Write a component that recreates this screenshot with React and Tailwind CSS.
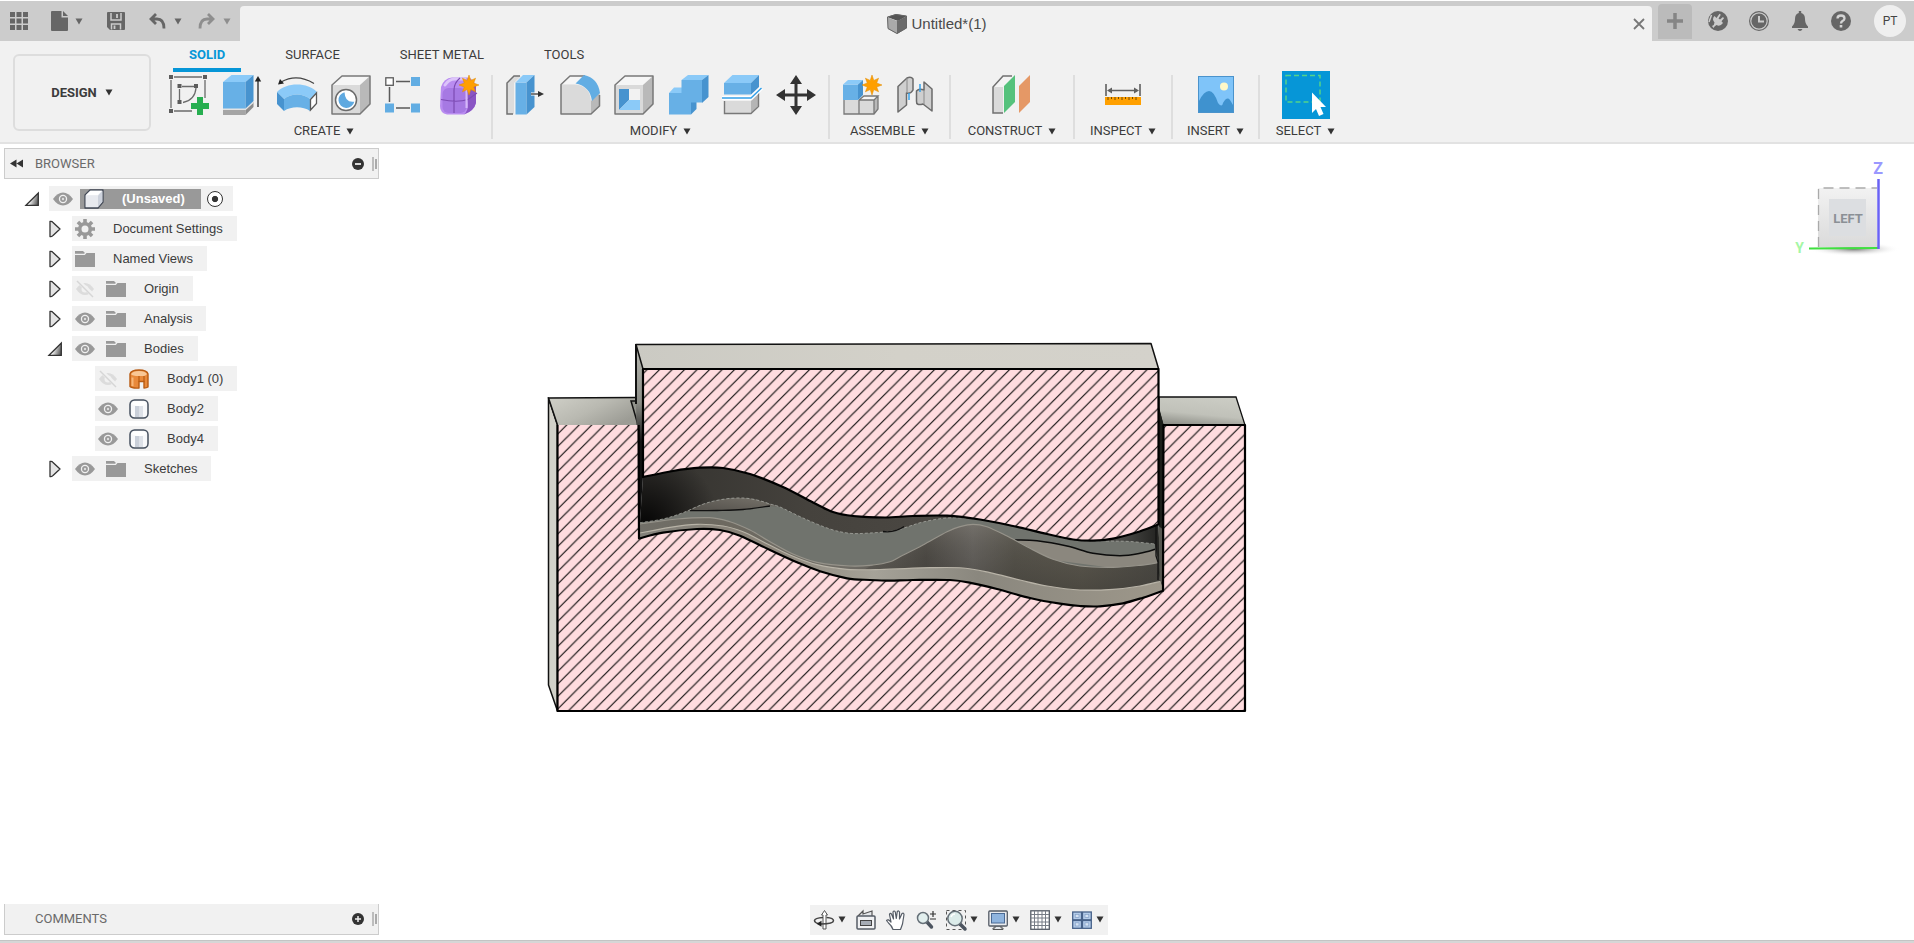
import React from "react";

/* ---------- geometry helpers ---------- */

// Smooth curve segment list through the points (Catmull-Rom to Bezier)
function curve(pts) {
  let d = "";
  for (let i = 0; i < pts.length - 1; i++) {
    const p0 = pts[i - 1] || pts[i];
    const p1 = pts[i];
    const p2 = pts[i + 1];
    const p3 = pts[i + 2] || p2;
    const c = [
      p1[0] + (p2[0] - p0[0]) / 6, p1[1] + (p2[1] - p0[1]) / 6,
      p2[0] - (p3[0] - p1[0]) / 6, p2[1] - (p3[1] - p1[1]) / 6,
      p2[0], p2[1],
    ].map((n) => n.toFixed(1));
    d += ` C${c.join(" ")}`;
  }
  return d;
}
const line = (pts) => `M${pts[0].join(" ")}${curve(pts)}`;
// Closed band between two left-to-right curves
const band = (top, bottom) => {
  const back = [...bottom].reverse();
  return `${line(top)} L${back[0].join(" ")}${curve(back)} Z`;
};

/* ---------- small shared pieces ---------- */

const Caret = ({ className = "text-[#333]" }) => (
  <svg width="8" height="7" viewBox="0 0 8 7" className={`shrink-0 ${className}`} aria-hidden="true">
    <path d="M0.5 0.5h7L4 6.5z" fill="currentColor" />
  </svg>
);

const Svg = ({ w = 40, h = 40, children }) => (
  <svg width={w} height={h} viewBox={`0 0 ${w} ${h}`} className="block shrink-0 overflow-visible" fill="none" aria-hidden="true">
    {children}
  </svg>
);

const Star = ({ x, y }) => (
  <path
    transform={`translate(${x} ${y})`}
    fill="#ff9f00"
    stroke="#e08a00"
    strokeWidth="0.5"
    d="M0-10 1.8-4.6 6.6-6.8 4.7-2 10 0 4.7 2 6.6 6.8 1.8 4.6 0 10-1.8 4.6-6.6 6.8-4.7 2-10 0-4.7-2-6.6-6.8-1.8-4.6z"
  />
);

/* ---------- ribbon icons ---------- */

const SketchIcon = () => (
  <Svg>
    <path d="M5 2h28M2 5v28M5 36h18M36 5v18M13 11.5h12M10.5 14v11M27 13q-1 12-13 14.5" stroke="#6b6b6b" strokeWidth="1.3" />
    {[[0, 0], [34, 0], [0, 34], [8.5, 9], [25, 9], [8.5, 25]].map(([x, y]) => (
      <rect key={`${x}-${y}`} x={x} y={y} width="4" height="4" fill="#5c5c5c" />
    ))}
    <path d="M28 22h6v6h6v6h-6v6h-6v-6h-6v-6h6z" fill="#27ae50" />
  </Svg>
);

const ExtrudeIcon = () => (
  <Svg>
    <path d="M0 35h22.500v5H0z" fill="#a5a5a5" />
    <path d="M22.500 35 30.500 27v5l-8 8z" fill="#8c8c8c" />
    <path d="M0 33h22.500L30.500 26v2l-8 7H0z" fill="#e3e3e3" />
    <path d="M0 7h22.500v26.500H0z" fill="#67b0e6" />
    <path d="M0 7 8.500 0h22l-8 7z" fill="#8bcaf8" />
    <path d="M22.500 7l8-7v26l-8 7.500z" fill="#4793cf" />
    <path d="M35 5v27" stroke="#222" strokeWidth="1.3" />
    <path d="M31.800 6.500 35 1l3.200 5.500z" fill="#222" />
  </Svg>
);

const RevolveIcon = () => (
  <Svg>
    <path d="M0 17C9 7 31 7 40 17l-7 7C26 18 14 18 7 24z" fill="#8bcaf8" />
    <path d="M7 24C14 18 26 18 33 24v12c-7-5-19-5-26 0z" fill="#67b0e6" />
    <path d="M0 17l7 7v12l-7-7z" fill="#4793cf" />
    <path d="M33.500 24.500 39.500 18v10.500L33.500 35z" fill="#fff" stroke="#5a5a5a" strokeWidth="1.3" />
    <path d="M4 7Q20-2 37 8.500" stroke="#444" strokeWidth="1.3" />
    <path d="M1 9.500 3 4l4 4.500z" fill="#222" />
  </Svg>
);

const GreyCube = () => (
  <>
    <path d="M1 10h28v29H1z" fill="#dadada" />
    <path d="M1 10 11 1h28l-10 9z" fill="#f6f6f6" />
    <path d="M29 10 39 1v28L29 39z" fill="#b9b9b9" />
    <path d="M1 10 11 1h28v28L29 39H1z" stroke="#787878" strokeWidth="1.5" strokeLinejoin="round" />
  </>
);

const HoleIcon = () => (
  <Svg>
    <GreyCube />
    <circle cx="15" cy="25" r="10.5" fill="#fff" stroke="#6b6b6b" strokeWidth="1.5" />
    <path d="M13.500 17.200a8 8 0 1 0 9.800 9.500Q14 28 13.500 17.200z" fill="#5fa9e0" />
  </Svg>
);

const PatternIcon = () => (
  <Svg>
    <path d="M11 6.500h14M4.500 12v15M11 33h14" stroke="#5a5a5a" strokeWidth="1.5" />
    <rect x="0.8" y="2.8" width="7.5" height="7.5" fill="#fff" stroke="#5a5a5a" strokeWidth="1.3" />
    <rect x="26" y="2" width="9" height="9" fill="#62ade3" />
    <rect x="0" y="28.5" width="9" height="9" fill="#62ade3" />
    <rect x="26" y="28.5" width="9" height="9" fill="#62ade3" />
  </Svg>
);

const FormIcon = () => (
  <Svg>
    <path d="M2 12Q5 3 13 2.500H28Q35 3 37 12V28Q35 36 25 39.500H8Q1 38 1 31z" fill="#b98cf0" />
    <path d="M28 16 37 10V28Q35 36 25 39.500Q29 36 29 30z" fill="#8a55c4" />
    <rect x="3.5" y="13" width="24" height="25" rx="6" fill="#a679e3" />
    <path d="M6 10Q10 4 16 4h10" stroke="#dcc4fa" strokeWidth="3" strokeLinecap="round" />
    <path d="M15 38V15Q15 8 21 3M2 24.500Q18 28 29 24.500L38 18" stroke="#7c4bb3" strokeWidth="1.2" />
    <path d="M27.500 14V33" stroke="#d4b8f8" strokeWidth="2" />
    <Star x={30} y={10} />
  </Svg>
);

const PressPullIcon = () => (
  <Svg>
    <path d="M1 8 8 1h7L8 8v31H1z" fill="#dcdcdc" />
    <path d="M14 1H8L1 8v31h6" stroke="#707070" strokeWidth="1.5" />
    <path d="M9.500 7.500h11v32h-11z" fill="#67b0e6" />
    <path d="M9.500 7.500 17 0h11.500l-8 7.500z" fill="#8bcaf8" />
    <path d="M20.500 7.500l8-7.500v32l-8 7.500z" fill="#4793cf" />
    <path d="M25 19h7" stroke="#fff" strokeWidth="3" />
    <path d="M25 19h8" stroke="#333" strokeWidth="1.3" />
    <path d="M32 16l6 3-6 3z" fill="#333" />
  </Svg>
);

const FilletIcon = () => (
  <Svg>
    <path d="M1 9.500 10 1H25L16 9.500z" fill="#f6f6f6" />
    <path d="M1 9.500H15Q30 11 31 26V39H1z" fill="#dadada" />
    <path d="M31 26 39.500 18V31L31 39z" fill="#b9b9b9" />
    <path d="M25 1H10L1 9.500V39H31L39.500 31V20" stroke="#787878" strokeWidth="1.5" strokeLinejoin="round" />
    <path d="M15.500 8.500 24 0Q38 3 40 18l-8 8Q30 11 15.500 8.500z" fill="#62ade3" />
  </Svg>
);

const ShellIcon = () => (
  <Svg>
    <GreyCube />
    <path d="M5 14h21v21H5z" fill="#f2f2f2" />
    <path d="M5 14h10v11L5 35z" fill="#4793cf" />
    <path d="M5 35l10-10h11v10z" fill="#8bcaf8" />
  </Svg>
);

const CombineIcon = () => (
  <Svg>
    <path d="M1 18 6 12.500h12L23 18z" fill="#8bcaf8" />
    <path d="M13.500 5 20 0h20.500L34 5z" fill="#8bcaf8" />
    <path d="M34 5l6.500-5v22L34 28z" fill="#4793cf" />
    <path d="M23 27h5.500v7L23 39.500z" fill="#4793cf" />
    <path d="M13.500 5H34v22.500H23v12H1V18h12.500z" fill="#67b0e6" />
  </Svg>
);

const SplitIcon = () => (
  <Svg>
    <path d="M2 8h27v11.500H2z" fill="#67b0e6" />
    <path d="M2 8l8.500-8H37l-8 8z" fill="#8bcaf8" />
    <path d="M29 8l8-8v12l-8 7.500z" fill="#4793cf" />
    <path d="M2.500 26H29v12.500H2.500z" fill="#dadada" />
    <path d="M29 26l7-7v12l-7 7.500z" fill="#b5b5b5" />
    <path d="M2.500 26v12.500H29l7.500-7V18" stroke="#787878" strokeWidth="1.4" />
    <path d="M0 23H29L39.500 13" stroke="#fff" strokeWidth="4" />
    <path d="M0 23H29L39.500 13" stroke="#35a0e8" strokeWidth="1.5" />
  </Svg>
);

const MoveIcon = () => (
  <Svg>
    <path d="M20 6v28M6 20h28" stroke="#333" strokeWidth="3" />
    <path d="M20 0l6 9H14zM20 40l6-9H14zM0 20l9-6v12zM40 20l-9-6v12z" fill="#333" />
  </Svg>
);

const NewComponentIcon = () => (
  <Svg>
    <path d="M1 25h15v14H1zM16 25h15v14H16z" fill="#dadada" />
    <path d="M16 25l5-4h14l-4 4z" fill="#f6f6f6" />
    <path d="M31 25l4-4v13l-4 5z" fill="#b9b9b9" />
    <path d="M1 25v14h30l4-5V21M16 25v14M16 25h15v14M31 25l4-4H21l-5 4" stroke="#787878" strokeWidth="1.3" />
    <path d="M0 9.500h15V25H0z" fill="#67b0e6" />
    <path d="M0 9.500 5 5h15l-5 4.500z" fill="#8bcaf8" />
    <path d="M15 9.500 20 5v15l-5 5z" fill="#4793cf" />
    <Star x={29} y={10} />
  </Svg>
);

const JointIcon = () => (
  <Svg>
    <path d="M1 11.500 10 3Q14 1 16 4V15Q14 19 9.500 18V30L1 37z" fill="#cfcfcf" stroke="#6b6b6b" strokeWidth="1.5" strokeLinejoin="round" />
    <path d="M10 3v15" stroke="#8a8a8a" />
    <path d="M12 18v7" stroke="#35a0e8" strokeWidth="1.5" />
    <path d="M27 7 35 14V36L26 29Q19 31 19.500 26V16Q22 13 27 15z" fill="#cfcfcf" stroke="#6b6b6b" strokeWidth="1.5" strokeLinejoin="round" />
    <path d="M27 15v14" stroke="#8a8a8a" />
    <path d="M23 9v8" stroke="#35a0e8" strokeWidth="1.5" />
  </Svg>
);

const ConstructIcon = () => (
  <Svg>
    <path d="M1 12 11 1h10L11 12v26H1z" fill="#f4f4f4" />
    <path d="M1 12h10v26H1z" fill="#dadada" />
    <path d="M20 1h-9L1 12v26h10" stroke="#707070" strokeWidth="1.5" />
    <path d="M12 11 23 0v27L12 38z" fill="#55c27c" />
    <path d="M27 11 38 0v27L27 38z" fill="#e59866" />
  </Svg>
);

const InspectIcon = () => (
  <Svg w={36}>
    <path d="M1 9v12M35 9v12M4 15.500h28" stroke="#606060" strokeWidth="1.6" />
    <path d="M2 15.500l5-3v6zM34 15.500l-5-3v6z" fill="#606060" />
    <rect x="0" y="22" width="36" height="8" fill="#ffa000" />
    <path d="M3 22v3M6.500 22v2M10 22v3M13.500 22v2M17 22v3M20.500 22v2M24 22v3M27.500 22v2M31 22v3" stroke="#744a00" />
  </Svg>
);

const InsertIcon = () => (
  <Svg w={36}>
    <rect x="0.5" y="1.5" width="35" height="36" fill="#7fc4f9" stroke="#4a93cc" />
    <circle cx="26" cy="11.5" r="4" fill="#fdf8c8" />
    <path d="M1 26Q6 16 11 16T20 28Q24 33 25 28 29 21 32 25L35 30V37H1z" fill="#3f92cf" />
  </Svg>
);

const SelectIcon = () => (
  <Svg w={48} h={48}>
    <rect width="48" height="48" fill="#0696d7" />
    <rect x="4" y="4.5" width="34" height="26.5" stroke="#54d38a" strokeWidth="1.5" strokeDasharray="5 3" />
    <path d="M30 21.500 44 36h-5.500l3 7-4.500 2-3-7-4 4z" fill="#fff" />
  </Svg>
);

const GROUPS = [
  { name: "CREATE", width: "w-[336px]", icons: [["Create Sketch", SketchIcon], ["Extrude", ExtrudeIcon], ["Revolve", RevolveIcon], ["Hole", HoleIcon], ["Pattern", PatternIcon], ["Create Form", FormIcon]] },
  { name: "MODIFY", width: "w-[337px]", icons: [["Press Pull", PressPullIcon], ["Fillet", FilletIcon], ["Shell", ShellIcon], ["Combine", CombineIcon], ["Split Body", SplitIcon], ["Move", MoveIcon]] },
  { name: "ASSEMBLE", width: "w-[121px]", icons: [["New Component", NewComponentIcon], ["Joint", JointIcon]] },
  { name: "CONSTRUCT", width: "w-[124px]", icons: [["Offset Plane", ConstructIcon]] },
  { name: "INSPECT", width: "w-[98px]", icons: [["Measure", InspectIcon]] },
  { name: "INSERT", width: "w-[87px]", icons: [["Insert Image", InsertIcon]] },
  { name: "SELECT", width: "w-[91px]", icons: [["Select", SelectIcon]] },
];

/* ---------- title bar ---------- */

function TitleBar() {
  return (
    <header className="mt-px flex h-10 items-center bg-[#ccc] text-[#666]">
      <div className="flex w-60 shrink-0 items-center pl-2.5">
        <button aria-label="Data panel">
          <Svg w={18} h={18}>
            {[0, 6.5, 13].map((y) => [0, 6.5, 13].map((x) => <rect key={`${x}-${y}`} x={x} y={y} width="5" height="5" fill="#666" />))}
          </Svg>
        </button>
        <button aria-label="File" className="ml-[23px] flex items-center gap-[7px]">
          <Svg w={17} h={20}>
            <path d="M1 0H10.500V6.500H17V19a1 1 0 0 1-1 1H1a1 1 0 0 1-1-1V1a1 1 0 0 1 1-1z" fill="#666" />
            <path d="M12 0l5 5h-5z" fill="#666" />
          </Svg>
          <Caret className="text-[#666]" />
        </button>
        <button aria-label="Save" className="ml-6">
          <Svg w={18} h={18}>
            <path d="M1 0H17a1 1 0 0 1 1 1V17a1 1 0 0 1-1 1H3L0 15V1a1 1 0 0 1 1-1z" fill="#666" />
            <path d="M4 1V8H14V1M4.500 17.500V12H13.500V17.500" stroke="#ccc" strokeWidth="1.5" />
            <path d="M10 2v4M7.500 13.500V17" stroke="#ccc" strokeWidth="1.8" />
          </Svg>
        </button>
        <button aria-label="Undo" className="ml-6 flex items-center gap-2">
          <Svg w={17} h={17}>
            <path d="M7 1 2 6l5 5M2 6h6q7 0 7 9.500" stroke="#666" strokeWidth="2.8" />
          </Svg>
          <Caret className="text-[#666]" />
        </button>
        <button aria-label="Redo" className="ml-4 flex items-center gap-2 opacity-60">
          <Svg w={17} h={17}>
            <path d="M10 1l5 5-5 5M15 6H9q-7 0-7 9.500" stroke="#666" strokeWidth="2.8" />
          </Svg>
          <Caret className="text-[#666]" />
        </button>
      </div>

      <div className="flex h-[35px] flex-1 items-center self-end rounded-t bg-[#f1f1f1] pl-2">
        <div className="flex flex-1 items-center justify-center gap-1 text-[15px] leading-5 text-[#4a4a4a]">
          <Svg w={20} h={20}>
            <path d="M0 3 9 0l11 2-9 5z" fill="#555" />
            <path d="M0 3l10 4v13L1 15z" fill="#a9a9a9" />
            <path d="M10 7 20 2v12l-10 6z" fill="#6a6a6a" />
            <path d="M0.500 3 9 .500 19.500 2v12l-9.500 5.500L1 14.500z" stroke="#666" />
          </Svg>
          <span>Untitled*(1)</span>
        </div>
        <button aria-label="Close tab" className="flex w-[26px] justify-center">
          <Svg w={10} h={10}><path d="M0 0l10 10M10 0 0 10" stroke="#777" strokeWidth="1.8" /></Svg>
        </button>
      </div>

      <div className="flex shrink-0 items-center pr-2 pl-1.5">
        <button aria-label="New tab" className="flex h-[35px] w-[34px] items-center justify-center self-end rounded-t bg-[#bbb]">
          <Svg w={16} h={16}><path d="M8 0v16M0 8h16" stroke="#858585" strokeWidth="3.5" /></Svg>
        </button>
        <div className="ml-4 flex items-center gap-[21px]">
          <button aria-label="Extensions">
            <Svg w={20} h={20}>
              <circle cx="10" cy="10" r="10" fill="#666" />
              <path d="M4 15Q6.500 14 6.500 11.500 3.500 8 6.500 5L8.500 7l3-4.200 1.300 1L10.500 7.500l1.500 1 3-2.500 1 1.200-2.500 3L15 12Q12 16 8.500 14 6.500 15 5.500 17z" fill="#ccc" />
              <path d="M3.500 4 1 11" stroke="#ccc" strokeWidth="1.5" />
            </Svg>
          </button>
          <button aria-label="Job status">
            <Svg w={20} h={20}>
              <circle cx="10" cy="10" r="9.4" stroke="#666" strokeWidth="1.2" />
              <circle cx="10" cy="10" r="7.6" fill="#666" />
              <path d="M10 5v5.500h5" stroke="#ccc" strokeWidth="2" />
            </Svg>
          </button>
          <button aria-label="Notifications">
            <Svg w={20} h={20}>
              <path d="M8.800 0h2.400V2Q15 3 15 8q0 5 3 7.500v1.500H2V15.500Q5 13 5 8 5 3 8.800 2zM7.500 18h5q-1 2-2.500 2t-2.500-2z" fill="#666" />
            </Svg>
          </button>
          <button aria-label="Help">
            <Svg w={20} h={20}>
              <circle cx="10" cy="10" r="10" fill="#666" />
              <path d="M6.500 7.500Q6.500 4.500 10 4.500t3.500 3Q13.500 9 11.500 10 10 11 10 12.500" stroke="#d4d4d4" strokeWidth="2.3" />
              <rect x="8.7" y="14" width="2.6" height="2.5" fill="#d4d4d4" />
            </Svg>
          </button>
        </div>
        <button aria-label="Account" className="ml-[23px] size-8 rounded-full bg-[#efefef] font-[Roboto,sans-serif] text-xs text-[#444]">PT</button>
      </div>
    </header>
  );
}

/* ---------- ribbon ---------- */

function Ribbon() {
  return (
    <section className="flex h-[103px] border-b-2 border-[#e2e2e2] bg-[#f1f1f1] font-[Roboto,sans-serif] text-[13px] leading-4 text-[#3c3c3c]">
      <button className="mt-[13px] ml-[13px] flex h-[77px] w-[138px] shrink-0 items-center justify-center gap-2 rounded-md border-2 border-[#ddd] font-bold">
        DESIGN <Caret />
      </button>
      <div className="ml-1.5 flex flex-col">
        <nav className="ml-4 flex h-[31px] items-stretch gap-7">
          {["SOLID", "SURFACE", "SHEET METAL", "TOOLS"].map((tab) => (
            <button
              key={tab}
              className={
                tab === "SOLID"
                  ? "border-b-4 border-[#0696d7] px-4 font-bold text-[#0696d7]"
                  : "border-b-4 border-transparent px-4"
              }
            >
              {tab}
            </button>
          ))}
        </nav>
        <div className="mt-[3px] flex h-16 divide-x-2 divide-[#dedede]">
          {GROUPS.map((g) => (
            <div key={g.name} className={`${g.width} flex flex-col items-center`}>
              <div className="flex h-10 shrink-0 items-center gap-3.5">
                {g.icons.map(([label, Icon]) => (
                  <button key={label} aria-label={label}><Icon /></button>
                ))}
              </div>
              <button className="mt-2 flex shrink-0 items-center gap-1.5">
                {g.name} <Caret />
              </button>
            </div>
          ))}
        </div>
      </div>
    </section>
  );
}

/* ---------- browser tree ---------- */

const Eye = () => (
  <Svg w={20} h={14}>
    <path d="M0 7Q4.500 0.500 10 0.500T20 7Q15.500 13.500 10 13.500T0 7z" fill="#999" />
    <circle cx="10" cy="7" r="4.2" fill="#f1f1f1" />
    <circle cx="10" cy="7" r="2.9" fill="#999" />
    <circle cx="10" cy="7" r="1.2" fill="#ddd" />
  </Svg>
);
const EyeOff = () => (
  <Svg w={20} h={16}>
    <path d="M1 8Q5 2 10 2t9 6q-4 6-9 6T1 8z" fill="#dcdcdc" />
    <circle cx="10" cy="8" r="3.5" fill="#f1f1f1" />
    <path d="M3 0l16 15" stroke="#f1f1f1" strokeWidth="4" />
    <path d="M2 0l16 16" stroke="#d6d6d6" strokeWidth="1.5" />
  </Svg>
);
const Folder = () => (
  <Svg w={20} h={16}>
    <path d="M0 0H8L10 2H20V16H0z" fill="#999" />
    <path d="M0 3.300H9.500L11 1.500" stroke="#f1f1f1" strokeWidth="1.3" />
  </Svg>
);
const Gear = () => (
  <Svg w={20} h={20}>
    <circle cx="10" cy="10" r="5.3" stroke="#999" strokeWidth="3.6" />
    {[0, 45, 90, 135].map((a) => (
      <path key={a} transform={`rotate(${a} 10 10)`} d="M10 0v4M10 16v4" stroke="#999" strokeWidth="3.6" />
    ))}
  </Svg>
);
const WhiteCube = () => (
  <Svg w={20} h={20}>
    <path d="M1 6 6 1h13v12l-5 6H1z" fill="#eef0f4" stroke="#444b58" strokeWidth="1.3" strokeLinejoin="round" />
    <path d="M1.800 6.500H14V18H1.800z" fill="#e8eaef" />
    <path d="M2 6l4.500-4.300H18L14 6z" fill="#fff" />
    <path d="M14 6.500 18.300 2v11L14 18z" fill="#cdd2dc" />
  </Svg>
);
const Body = () => (
  <Svg w={20} h={20}>
    <rect x="1" y="1" width="18" height="18" rx="4.5" fill="#f8f9fb" stroke="#46505f" strokeWidth="1.5" />
    <path d="M6 7h8v11H6z" fill="#c9cfd9" />
    <path d="M10 7h4v11h-4z" fill="#dde1e8" />
    <ellipse cx="10" cy="4.5" rx="7" ry="2.5" fill="#fff" />
  </Svg>
);
const BrokenBody = () => (
  <Svg w={20} h={20}>
    <path d="M1 5Q2 1 10 1t9 4V18Q17.500 19 15 19V12.500H10V19Q3 19.500 1 17.500z" fill="#e8893a" stroke="#b85b12" strokeWidth="1.4" strokeLinejoin="round" />
    <path d="M2 5Q4 2 10 2t8 3Q17 6.500 15 7H10Q3 7 2 5z" fill="#f9c795" />
    <path d="M3.500 8.500v8.500" stroke="#f7b679" strokeWidth="2" />
    <path d="M10 7v6M15 7v6" stroke="#b85b12" strokeWidth="1.2" />
  </Svg>
);

const OpenArrow = () => (
  <Svg w={14} h={14}>
    <defs>
      <linearGradient id="openArrow" x1="0.3" y1="0.5" x2="1" y2="0.7">
        <stop offset="0" stopColor="#fff" />
        <stop offset="1" stopColor="#555" />
      </linearGradient>
    </defs>
    <path d="M1 13.300 13.300 1v12.300z" fill="url(#openArrow)" stroke="#333" strokeWidth="1.3" />
  </Svg>
);
const ClosedArrow = () => (
  <Svg w={14} h={18}>
    <path d="M2 1.500Q4 1 5 2.500L12 9 5 15.500Q4 17 2 16.500z" fill="#e4e4e4" stroke="#333" strokeWidth="1.3" strokeLinejoin="round" />
  </Svg>
);

const TREE = [
  { label: "Document Settings", level: 1, arrow: "closed", icon: Gear },
  { label: "Named Views", level: 1, arrow: "closed", icon: Folder },
  { label: "Origin", level: 1, arrow: "closed", eye: "off", icon: Folder },
  { label: "Analysis", level: 1, arrow: "closed", eye: "on", icon: Folder },
  { label: "Bodies", level: 1, arrow: "open", eye: "on", icon: Folder },
  { label: "Body1 (0)", level: 2, eye: "off", icon: BrokenBody },
  { label: "Body2", level: 2, eye: "on", icon: Body },
  { label: "Body4", level: 2, eye: "on", icon: Body },
  { label: "Sketches", level: 1, arrow: "closed", eye: "on", icon: Folder },
];

const Toggle = ({ kind }) => (
  <span className="mr-2.5 flex w-3.5 justify-center">
    {kind && (
      <button aria-label={kind === "open" ? "Collapse" : "Expand"}>
        {kind === "open" ? <OpenArrow /> : <ClosedArrow />}
      </button>
    )}
  </span>
);

const Grip = () => (
  <svg width="5" height="14" viewBox="0 0 5 14" aria-hidden="true">
    <path d="M1 0v14" stroke="#888" />
    <path d="M4 2v10" stroke="#aaa" strokeWidth="2" />
  </svg>
);

function Browser() {
  return (
    <aside className="w-[375px]">
      <div className="flex h-[31px] items-center border border-[#ccc] bg-[#f1f1f1] pr-px pl-[5px] text-[#6a6a6a]">
        <button aria-label="Collapse browser">
          <Svg w={13} h={9}><path d="M6.500 0.500v8L0 4.500zM13 0.500v8L6.500 4.500z" fill="#333" /></Svg>
        </button>
        <h2 className="ml-3 flex-1 font-[Roboto,sans-serif] text-[13px] leading-4">BROWSER</h2>
        <button aria-label="Hide browser" className="mr-2">
          <Svg w={12} h={12}><circle cx="6" cy="6" r="6" fill="#333" /><path d="M3 6h6" stroke="#eee" strokeWidth="1.8" /></Svg>
        </button>
        <Grip />
      </div>
      <ul className="mt-[7px] flex flex-col gap-[5px] pl-[21px] text-[13px] leading-4 text-[#3c3c3c]">
        <li className="flex h-[25px] items-center">
          <Toggle kind="open" />
          <div className="flex h-full items-center bg-[#f1f1f1] pr-2.5 pl-1">
            <button aria-label="Toggle visibility"><Eye /></button>
            <label htmlFor="activeRoot" className="ml-[7px] flex h-5 items-center gap-[18px] bg-[#999] pr-4 pl-1 font-bold text-white">
              <WhiteCube />(Unsaved)
            </label>
            <input
              id="activeRoot"
              type="radio"
              defaultChecked
              className="ml-1.5 size-4 appearance-none rounded-full border border-[#333] bg-[radial-gradient(#333_28%,#fff_36%)]"
            />
          </div>
        </li>
        {TREE.map(({ label, level, arrow, eye, icon: Icon }) => (
          <li key={label} className={level === 1 ? "flex h-[25px] items-center pl-[23px]" : "flex h-[25px] items-center pl-[46px]"}>
            <Toggle kind={arrow} />
            <div className="flex h-full items-center bg-[#f1f1f1] pr-3.5 pl-[3px]">
              {eye && (
                <button aria-label={`Toggle visibility of ${label}`} className="mr-[11px]">
                  {eye === "on" ? <Eye /> : <EyeOff />}
                </button>
              )}
              <Icon />
              <span className="ml-[18px]">{label}</span>
            </div>
          </li>
        ))}
      </ul>
    </aside>
  );
}

/* ---------- section view of the model ---------- */

const UPPER = [[643, 477], [673, 471], [700, 467.7], [723, 468], [750, 474], [783, 487], [813, 502.5], [833, 512], [853, 516], [885, 517.5], [913, 516], [947, 515.7], [980, 519.5], [1013, 526], [1047, 534], [1073, 539.5], [1093, 540.7], [1113, 538.7], [1137, 532.3], [1158, 524.5]];
const LOWER = [[639, 538.5], [663, 532.7], [697, 529], [720, 530], [740, 535.7], [770, 550], [797, 562.3], [820, 571.3], [847, 578.3], [870, 580], [890, 580.7], [913, 580], [950, 580], [973, 583.3], [997, 589], [1030, 598], [1060, 603.7], [1080, 606], [1100, 606.3], [1123, 603.3], [1143, 597.7], [1163, 590.7]];
const RIDGE = [[640, 522.7], [663, 519], [683, 512.7], [705, 503.5], [725, 499], [743, 498], [757, 500], [770, 504], [780, 507], [803, 518], [830, 529], [850, 533.3], [870, 533], [893, 531], [907, 527], [923, 522], [947, 518], [975, 519], [1013, 526], [1047, 534], [1073, 540], [1105, 541], [1130, 541.5], [1155, 544]];
const FLOOR_TOP = [[690, 510.5], [717, 510.5], [743, 509.5], [770, 506], [780, 507]];
const HILL = [[640, 524], [677, 519], [710, 517.7], [730, 521.7], [750, 530], [770, 541.7], [793, 554], [817, 562.3], [850, 566], [873, 565], [890, 561.7], [900, 556.7], [923, 545], [947, 531.7], [960, 526.7], [973, 524.3], [987, 526.7], [1007, 536], [1027, 546.7], [1053, 559.3], [1080, 566], [1113, 567.3], [1140, 565.3], [1158, 562.7]];
const RIM = [[640, 533], [670, 527.3], [697, 524.3], [723, 526], [743, 531.7], [763, 541.7], [790, 555], [817, 564.7], [847, 569.3], [880, 569.5], [930, 567.7], [963, 568], [990, 572.7], [1020, 580], [1047, 586], [1080, 590], [1113, 589.3], [1140, 586], [1162, 581]];
const CHANNEL = [[1015, 540], [1037, 540.7], [1067, 546], [1093, 553.3], [1120, 555.7], [1140, 553.3], [1155, 549.3]];

const topFace = `M643 369H1158.500V524.500${curve([...UPPER].reverse())} Z`;
const baseFace = `M557.500 425H638.500L639 538.500${curve(LOWER)} L1163.500 425H1245V711H557.500 Z`;

function Model() {
  return (
    <svg viewBox="0 144 1914 796" className="absolute inset-0 size-full" role="img" aria-label="Section view of the two-part mould">
      <defs>
        <pattern id="hatch" width="12.5" height="12.5" patternUnits="userSpaceOnUse" patternTransform="translate(4.2 0)">
          <rect width="12.5" height="12.5" fill="#ffdcdf" />
          <path d="M-2 14.500 14.500-2M10.500 14.500l4-4M-2 2l4-4" stroke="#0c0a0a" strokeWidth="1.15" />
        </pattern>
        <linearGradient id="slab"><stop offset="0" stopColor="#cbcac3" /><stop offset="0.5" stopColor="#d3d1c9" /><stop offset="1" stopColor="#d4d2cb" /></linearGradient>
        <linearGradient id="ledgeL" x1="0" y1="0" x2="1" y2="0.6"><stop offset="0" stopColor="#d0d0c8" /><stop offset="0.55" stopColor="#b9b9b1" /><stop offset="1" stopColor="#9c9c95" /></linearGradient>
        <linearGradient id="ledgeR" x1="0.6" y1="0" x2="0.3" y2="1"><stop offset="0" stopColor="#cbccc4" /><stop offset="0.6" stopColor="#c0c1b9" /><stop offset="1" stopColor="#90918a" /></linearGradient>
        <linearGradient id="gap" x1="0" y1="0" x2="0" y2="1"><stop offset="0" stopColor="#b9bab3" /><stop offset="0.3" stopColor="#8c8d87" /><stop offset="0.5" stopColor="#151515" /><stop offset="1" stopColor="#0a0a0a" /></linearGradient>
        <linearGradient id="cave"><stop offset="0" stopColor="#33312e" /><stop offset="0.12" stopColor="#393733" /><stop offset="0.32" stopColor="#45423d" /><stop offset="0.6" stopColor="#4b4843" /><stop offset="0.92" stopColor="#4a4a47" /><stop offset="1" stopColor="#1e1e1c" /></linearGradient>
        <radialGradient id="shade" gradientUnits="userSpaceOnUse" cx="645" cy="525" r="75"><stop offset="0" stopColor="#000" stopOpacity="0.9" /><stop offset="1" stopColor="#000" stopOpacity="0" /></radialGradient>
        <linearGradient id="wedge" x1="0" y1="1" x2="1" y2="0"><stop offset="0" stopColor="#4f4c47" /><stop offset="1" stopColor="#77736b" /></linearGradient>
        <linearGradient id="hill" gradientUnits="userSpaceOnUse" x1="640" y1="0" x2="1160" y2="0"><stop offset="0" stopColor="#716f68" /><stop offset="0.15" stopColor="#6d6960" /><stop offset="0.4" stopColor="#6f6c65" /><stop offset="0.55" stopColor="#4d4a45" /><stop offset="0.64" stopColor="#66635f" /><stop offset="0.72" stopColor="#56534b" /><stop offset="0.85" stopColor="#5d594f" /><stop offset="1" stopColor="#4b4944" /></linearGradient>
        <linearGradient id="hillShade" gradientUnits="userSpaceOnUse" x1="0" y1="525" x2="0" y2="590"><stop offset="0" stopColor="#9a958a" stopOpacity="0.25" /><stop offset="0.5" stopColor="#3a3833" stopOpacity="0.15" /><stop offset="1" stopColor="#3a3833" stopOpacity="0.5" /></linearGradient>
        <linearGradient id="rim" gradientUnits="userSpaceOnUse" x1="640" y1="0" x2="1160" y2="0"><stop offset="0" stopColor="#83817a" /><stop offset="0.25" stopColor="#8a8378" /><stop offset="0.45" stopColor="#a5a298" /><stop offset="0.65" stopColor="#8a877e" /><stop offset="1" stopColor="#9d978a" /></linearGradient>
      </defs>

      {/* base block: side, ledges */}
      <path d="M548.500 398l9 27v286l-9-26z" fill="#d2d1c9" stroke="#111" strokeWidth="1.5" strokeLinejoin="round" />
      <path d="M548.500 398 636 397l3 28H557.500z" fill="url(#ledgeL)" />
      <path d="M557.500 425 548.500 398l87.500-.5" fill="none" stroke="#111" strokeWidth="1.5" />
      <path d="M638 425l-7-24h5" fill="#92938c" stroke="#111" strokeWidth="1.5" />
      <path d="M1159 397h77l9 28h-82l-4-14z" fill="url(#ledgeR)" stroke="#111" strokeWidth="1.3" />

      {/* cavity interior */}
      <path d={band(UPPER, LOWER)} fill="url(#cave)" />
      <path d={band(UPPER, LOWER)} fill="url(#shade)" />
      <path d={band(RIDGE, LOWER)} fill="#70736d" />
      <path d={`${line(RIDGE.slice(2, 9))} L770 506 743 509.500 717 511 690 510.500 Z`} fill="url(#wedge)" />
      <path d={line(FLOOR_TOP.slice(0, 4))} fill="none" stroke="#111" strokeWidth="1.3" />
      <path d={line(RIDGE)} fill="none" stroke="#a5a69f" strokeWidth="0.8" strokeDasharray="3 2" />
      <path d={`${line(CHANNEL)} L1158 564 1113 568 1053 560Z`} fill="#8b877e" />
      <path d={line(CHANNEL)} fill="none" stroke="#0c0c0c" strokeWidth="1.6" />
      <path d={band(HILL, LOWER)} fill="url(#hill)" />
      <path d={band(HILL.slice(9), LOWER.slice(8))} fill="url(#hillShade)" />
      <path d={line(HILL)} fill="none" stroke="#96938a" strokeWidth="1.2" />
      <path d={band(RIM, LOWER)} fill="url(#rim)" />
      <path d={line(RIM)} fill="none" stroke="#b8b3a7" strokeWidth="1.2" />
      <path d="M883 531.500q12 1.500 21-5" fill="none" stroke="#111" strokeWidth="1.3" />

      {/* clearance gaps on both sides */}
      <path d="M636 344l7 25v108l-4 61.500L636 405z" fill="url(#gap)" />
      <path d="M1158.500 405l5 20V591l-5-18z" fill="#1c1e1a" />
      <path d="M1158.500 526l4 3V584l-3-4z" fill="#55554f" />
      <path d="M1156 526v30l2 6v18" fill="none" stroke="#111" strokeWidth="1.3" />

      {/* top slab */}
      <path d="M636 344.500 1151 343.500l7.500 25L643 369z" fill="url(#slab)" stroke="#111" strokeWidth="1.5" strokeLinejoin="round" />
      <path d="M636 344v60M638.500 425l.500 113.500" fill="none" stroke="#111" strokeWidth="2" />

      {/* cut faces */}
      <path d={topFace} fill="url(#hatch)" />
      <path d={baseFace} fill="url(#hatch)" />
      <path d={topFace} fill="none" stroke="#000" strokeWidth="2.2" strokeLinejoin="round" />
      <path d={`M638.500 425 639 538.500${curve(LOWER)} L1163.500 425H1245V711H557.500V425`} fill="none" stroke="#000" strokeWidth="2.2" strokeLinejoin="round" />
    </svg>
  );
}

function ViewCube() {
  return (
    <svg width="110" height="100" viewBox="0 0 110 100" className="absolute top-4 right-[14px]" role="img" aria-label="View cube">
      <defs>
        <linearGradient id="cubeFace" x1="0" y1="0" x2="0" y2="1"><stop offset="0" stopColor="#f2f2f2" /><stop offset="1" stopColor="#dadada" /></linearGradient>
        <radialGradient id="cubeShadow"><stop offset="0" stopColor="#777" /><stop offset="1" stopColor="#fff" stopOpacity="0" /></radialGradient>
      </defs>
      <ellipse cx="64" cy="89" rx="46" ry="7" fill="url(#cubeShadow)" />
      <rect x="28" y="28" width="59" height="59" fill="url(#cubeFace)" />
      <path d="M28.500 87V28H87" fill="none" stroke="#aaa" strokeWidth="1.3" strokeDasharray="10 6" />
      <rect x="39" y="39" width="37" height="37" fill="#dcdee1" />
      <text x="58" y="63" textAnchor="middle" className="fill-[#8b9096] font-[Roboto,sans-serif] text-[13px] font-bold">LEFT</text>
      <path d="M19 88.500 88 88" stroke="#3fe03f" strokeWidth="2.2" />
      <path d="M88.500 19v70" stroke="#6a62f5" strokeWidth="2.5" />
      <text x="88" y="14" textAnchor="middle" className="fill-[#9a98ff] font-[Roboto,sans-serif] text-[16px] font-bold">Z</text>
      <text x="9.5" y="93" textAnchor="middle" className="fill-[#a5f7a5] font-[Roboto,sans-serif] text-[14px] font-bold">Y</text>
    </svg>
  );
}

/* ---------- navigation bar ---------- */

const OrbitIcon = () => (
  <Svg w={20} h={20}>
    <path d="M9 19V5L7.500 5 10.500 0.500 13.500 5H12V19z" fill="#fff" stroke="#555" />
    <path d="M9 7.500Q1 8 .500 10.500.500 13 6 14M12.500 7.500q7 .500 7 3.200 0 3-13 3.300" stroke="#444" strokeWidth="1.5" />
    <path d="M2.500 13.800l5-3v6z" fill="#222" />
  </Svg>
);
const LookAtIcon = () => (
  <Svg w={20} h={20}>
    <path d="M2 6 7 1V4L16 1V6" fill="#e5e7ea" stroke="#555" strokeWidth="1.2" />
    <rect x="1" y="6" width="18" height="13" rx="1" fill="#f0f1f3" stroke="#555c66" strokeWidth="1.5" />
    <rect x="4.5" y="10.5" width="11" height="5" fill="#a6acb5" stroke="#444" />
  </Svg>
);
const HandIcon = () => (
  <Svg w={20} h={20}>
    <path d="M7 19.500Q6 16 2.500 13L.500 10.500Q2 8.500 5 12L3.500 4.500Q4 2.500 5.500 4L7.500 9 7 2Q8 0 9.300 2L10.300 8.500 11.300 1.500Q12.800.200 13.500 2L13.500 9 16 3.500Q17.800 2.500 18 4.500L16.500 14 14.500 19.500z" fill="#fff" stroke="#555c66" strokeWidth="1.2" strokeLinejoin="round" />
  </Svg>
);
const ZoomIcon = () => (
  <Svg w={20} h={20}>
    <path d="M11 12l4.500 5" stroke="#4d5560" strokeWidth="3.5" strokeLinecap="round" />
    <circle cx="7" cy="8" r="5.5" fill="#e2efee" stroke="#667078" strokeWidth="1.5" />
    <path d="M17 1v6M14 4h6M14 9h6" stroke="#333" strokeWidth="1.2" />
  </Svg>
);
const ZoomWindowIcon = () => (
  <Svg w={20} h={20}>
    <rect x="0.5" y="0.5" width="19" height="19" stroke="#555" strokeDasharray="3 3" />
    <path d="M14 14l5 5" stroke="#4d5560" strokeWidth="3.5" strokeLinecap="round" />
    <circle cx="9" cy="8.5" r="7.2" fill="#dcecea" stroke="#667078" strokeWidth="1.5" />
    <path d="M5 7Q6 4 9 4" stroke="#fff" strokeWidth="1.5" />
  </Svg>
);
const MonitorIcon = () => (
  <Svg w={20} h={20}>
    <path d="M7 16h6v2h2v1.500H5V18h2z" fill="#e5e7ea" stroke="#555" />
    <rect x="0.8" y="1" width="18.5" height="15" rx="1" fill="#e9ebee" stroke="#555c66" strokeWidth="1.3" />
    <rect x="3.5" y="3.5" width="13" height="9.5" fill="#8fb4de" stroke="#4a6a94" />
  </Svg>
);
const GridIcon = () => (
  <Svg w={20} h={20}>
    <rect x="0.8" y="0.8" width="18.5" height="18.5" fill="#fff" stroke="#555c66" strokeWidth="1.3" />
    <path d="M4.500 1v18M8 1v18M12 1v18M15.500 1v18M1 4.500h18M1 8h18M1 12h18M1 15.500h18" stroke="#777d86" />
  </Svg>
);
const ViewportsIcon = () => (
  <Svg w={20} h={18}>
    {[[0.7, 1], [10.5, 1], [0.7, 9.5], [10.5, 9.5]].map(([x, y]) => (
      <g key={`${x}-${y}`}>
        <rect x={x} y={y} width="8.8" height="7.8" fill="#b5cdea" stroke="#47628a" strokeWidth="1.3" />
        <rect x={x + 2.5} y={y + 2.3} width="3.8" height="3.2" fill="#d5e3f4" stroke="#7f9cc4" strokeWidth="0.7" />
      </g>
    ))}
  </Svg>
);

const NAV = [
  ["Orbit", OrbitIcon, true],
  ["Look at", LookAtIcon, false],
  ["Pan", HandIcon, false],
  ["Zoom", ZoomIcon, false],
  ["Zoom window", ZoomWindowIcon, true],
  ["Display settings", MonitorIcon, true],
  ["Grid and snaps", GridIcon, true],
  ["Viewports", ViewportsIcon, true],
];

export default function App() {
  return (
    <div className="flex min-h-screen flex-col bg-white font-['Liberation_Sans',Arial,sans-serif]">
      <TitleBar />
      <Ribbon />
      <main className="relative flex flex-1 flex-col justify-between">
        <Model />
        <ViewCube />
        <div className="relative mt-1 ml-1"><Browser /></div>
        <div className="relative mb-[5px] grid grid-cols-[1fr_auto_1fr] items-center pl-1">
          <div className="flex h-[31px] w-[375px] items-center border border-t-0 border-[#ccc] bg-[#f1f1f1] pr-px pl-[30px] text-[#6a6a6a]">
            <h2 className="flex-1 font-[Roboto,sans-serif] text-[13px] leading-4">COMMENTS</h2>
            <button aria-label="Show comments" className="mr-2">
              <Svg w={12} h={12}><circle cx="6" cy="6" r="6" fill="#333" /><path d="M3 6h6M6 3v6" stroke="#eee" strokeWidth="1.5" /></Svg>
            </button>
            <Grip />
          </div>
          <div className="flex h-[30px] items-center gap-2.5 bg-[#f1f1f1] px-1">
            {NAV.map(([label, Icon, menu]) => (
              <button key={label} aria-label={label} className="flex items-center gap-1">
                <Icon />
                {menu && <Caret />}
              </button>
            ))}
          </div>
          <div />
        </div>
      </main>
      <footer className="h-[3px] border-t border-[#c4c4c4] bg-[#d6d6d6]" />
    </div>
  );
}
